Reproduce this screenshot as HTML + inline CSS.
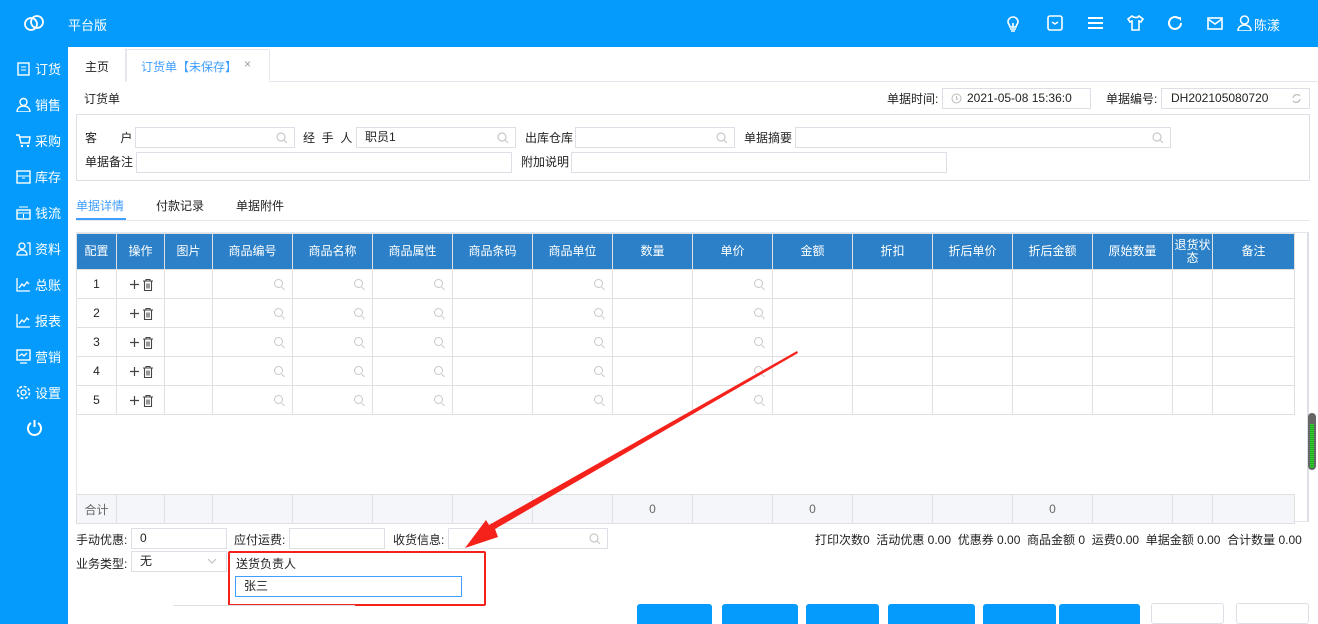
<!DOCTYPE html>
<html><head><meta charset="utf-8"><style>
*{margin:0;padding:0;box-sizing:border-box}
body{width:1318px;height:624px;overflow:hidden;background:#fff;font-family:"Liberation Sans","Noto Sans CJK SC",sans-serif;font-size:12px;color:#222;position:relative}
.a{position:absolute}
#top{left:0;top:0;width:1318px;height:47px;background:#049bfd}
#side{left:0;top:47px;width:68px;height:577px;background:#049bfd}
.nav{position:absolute;left:16px;color:#fff;font-size:13px;display:flex;align-items:center;gap:4px}
.nav svg{width:15px;height:15px}
.inp{position:absolute;border:1px solid #dcdfe6;background:#fff;height:21px;font-size:12px;padding-left:8px;line-height:19px}
.lbl{position:absolute;font-size:12px;color:#222}
table{position:absolute;left:76px;top:233px;border-collapse:collapse;table-layout:fixed}
th{background:#2b80c8;color:#fff;font-weight:normal;height:36px;border:1px solid #e0e0e0;font-size:12px;line-height:13px}
td{height:29px;border:1px solid #e0e0e0;text-align:center;position:relative;font-size:12px}
td.s::after{content:"";position:absolute;right:9px;top:9px;width:7px;height:7px;border:1.3px solid #c8c8c8;border-radius:50%}
td.s::before{content:"";position:absolute;right:7px;top:18px;width:4px;height:1.3px;background:#c8c8c8;transform:rotate(45deg)}
.op svg{vertical-align:middle}
.btn{position:absolute;top:604px;height:20px;background:#049bfd;border-radius:3px 3px 0 0}
</style></head><body>
<div id="top" class="a">
 <svg class="a" style="left:22px;top:13px" width="24" height="20" viewBox="0 0 24 20"><g fill="none" stroke="#fff" stroke-width="1.8"><circle cx="9" cy="11" r="6"/><circle cx="15" cy="9" r="6"/></g></svg>
 <div class="a" style="left:68px;top:15px;color:#fff;font-size:13px">平台版</div>
 <svg class="a" style="left:1005px;top:15px" width="16" height="17" viewBox="0 0 16 17"><g fill="none" stroke="#fff" stroke-width="1.6"><path d="M3 7a5 5 0 0 1 10 0c0 2-2 3-2 5H5c0-2-2-3-2-5z"/><path d="M5 14h6M6 16h4M8 8v4"/></g></svg>
 <svg class="a" style="left:1047px;top:15px" width="16" height="16" viewBox="0 0 16 16"><rect x="1" y="1" width="14" height="14" rx="2" fill="none" stroke="#fff" stroke-width="1.6"/><path d="M5 7l3 2 3-2" fill="none" stroke="#fff" stroke-width="1.5"/></svg>
 <svg class="a" style="left:1088px;top:16px" width="15" height="14"><path d="M0 2h15M0 7h15M0 12h15" stroke="#fff" stroke-width="2"/></svg>
 <svg class="a" style="left:1127px;top:15px" width="17" height="16" viewBox="0 0 17 16"><path d="M5 1l-4 3 2 3 2-1v9h7V6l2 1 2-3-4-3c-1 2-5 2-7 0z" fill="none" stroke="#fff" stroke-width="1.6"/></svg>
 <svg class="a" style="left:1167px;top:15px" width="16" height="16" viewBox="0 0 16 16"><path d="M14 8a6 6 0 1 1-2-4.5" fill="none" stroke="#fff" stroke-width="2"/><path d="M10 2l4 0 0 4z" fill="#fff"/></svg>
 <svg class="a" style="left:1207px;top:17px" width="16" height="13" viewBox="0 0 16 13"><rect x="1" y="1" width="14" height="11" fill="none" stroke="#fff" stroke-width="1.6"/><path d="M1 2l7 5 7-5" fill="none" stroke="#fff" stroke-width="1.6"/></svg>
 <svg class="a" style="left:1237px;top:15px" width="15" height="16" viewBox="0 0 15 16"><circle cx="7.5" cy="5" r="4" fill="none" stroke="#fff" stroke-width="1.5"/><path d="M1 16c0-4 3-6 6.5-6s6.5 2 6.5 6z" fill="none" stroke="#fff" stroke-width="1.5"/></svg>
 <div class="a" style="left:1254px;top:15px;color:#fff;font-size:13px">陈漾</div>
</div>
<div id="side" class="a">
 <div class="nav" style="top:12px"><svg viewBox="0 0 15 15"><rect x="2" y="2" width="11" height="12" fill="none" stroke="#fff" stroke-width="1.4"/><path d="M5 6h5M5 9h5" stroke="#fff"/></svg>订货</div>
 <div class="nav" style="top:48px"><svg viewBox="0 0 15 15"><circle cx="7.5" cy="5" r="3.5" fill="none" stroke="#fff" stroke-width="1.4"/><path d="M1 15c0-4 3-6 6.5-6s6.5 2 6.5 6z" fill="none" stroke="#fff" stroke-width="1.4"/></svg>销售</div>
 <div class="nav" style="top:84px"><svg viewBox="0 0 15 15"><path d="M0 2h3l2 8h8l1-6H4" fill="none" stroke="#fff" stroke-width="1.4"/><circle cx="6" cy="13" r="1.2" fill="#fff"/><circle cx="12" cy="13" r="1.2" fill="#fff"/></svg>采购</div>
 <div class="nav" style="top:120px"><svg viewBox="0 0 15 15"><rect x="1" y="2" width="13" height="12" fill="none" stroke="#fff" stroke-width="1.4"/><path d="M1 7h13M6 9h3" stroke="#fff"/></svg>库存</div>
 <div class="nav" style="top:156px"><svg viewBox="0 0 15 15"><rect x="1" y="5" width="13" height="9" fill="none" stroke="#fff" stroke-width="1.4"/><path d="M3 2h9M1 8h13M7.5 9v4" stroke="#fff"/></svg>钱流</div>
 <div class="nav" style="top:192px"><svg viewBox="0 0 15 15"><circle cx="6" cy="5" r="3" fill="none" stroke="#fff" stroke-width="1.3"/><path d="M1 14c0-3 2-5 5-5s5 2 5 5zM11 2h3v12" fill="none" stroke="#fff" stroke-width="1.3"/></svg>资料</div>
 <div class="nav" style="top:228px"><svg viewBox="0 0 15 15"><path d="M1 1v13h13M3 11l3-4 2 2 3-4 2 2" fill="none" stroke="#fff" stroke-width="1.3"/></svg>总账</div>
 <div class="nav" style="top:264px"><svg viewBox="0 0 15 15"><path d="M1 1v13h13M3 11l3-4 2 2 3-4 2 2" fill="none" stroke="#fff" stroke-width="1.3"/></svg>报表</div>
 <div class="nav" style="top:300px"><svg viewBox="0 0 15 15"><rect x="1" y="1" width="13" height="10" fill="none" stroke="#fff" stroke-width="1.4"/><path d="M4 14h7M3 7l3-2 2 2 3-3" fill="none" stroke="#fff" stroke-width="1.3"/></svg>营销</div>
 <div class="nav" style="top:336px"><svg viewBox="0 0 15 15"><circle cx="7.5" cy="7.5" r="2.5" fill="none" stroke="#fff" stroke-width="1.3"/><circle cx="7.5" cy="7.5" r="6" fill="none" stroke="#fff" stroke-width="1.6" stroke-dasharray="3 1.7"/></svg>设置</div>
 <svg class="a" style="left:26px;top:372px" width="17" height="17" viewBox="0 0 17 17"><path d="M5 4a6.5 6.5 0 1 0 7 0" fill="none" stroke="#fff" stroke-width="2"/><path d="M8.5 1v7" stroke="#fff" stroke-width="2"/></svg>
</div>
<div class="a" style="left:68px;top:81px;width:1250px;height:1px;background:#e4e7ed"></div>
<div class="a" style="left:68px;top:48px;width:58px;height:34px;border-right:1px solid #e4e7ed;background:#fff"></div>
<div class="lbl" style="left:85px;top:58px">主页</div>
<div class="a" style="left:126px;top:49px;width:144px;height:33px;border:1px solid #e4e7ed;border-bottom:1px solid #fff;background:#fff"></div>
<div class="lbl" style="left:141px;top:58px;color:#409eff">订货单【未保存】</div>
<div class="lbl" style="left:244px;top:57px;color:#999">×</div>
<div class="lbl" style="left:84px;top:90px">订货单</div>
<div class="lbl" style="left:887px;top:90px">单据时间:</div>
<div class="inp" style="left:942px;top:88px;width:149px;padding-left:24px">2021-05-08 15:36:0</div>
<svg class="a" style="left:951px;top:93px" width="11" height="11"><circle cx="5.5" cy="5.5" r="4.5" fill="none" stroke="#bbb"/><path d="M5.5 3v3h2" fill="none" stroke="#bbb"/></svg>
<div class="lbl" style="left:1106px;top:90px">单据编号:</div>
<div class="inp" style="left:1161px;top:88px;width:149px;padding-left:9px">DH202105080720</div>
<svg class="a" style="left:1291px;top:93px" width="11" height="11"><path d="M2 5a4 4 0 0 1 7-2M9 6a4 4 0 0 1-7 2" fill="none" stroke="#bbb" stroke-width="1.2"/></svg>
<div class="a" style="left:76px;top:114px;width:1234px;height:67px;border:1px solid #dcdfe6"></div>
<div class="lbl" style="left:85px;top:129px">客&nbsp;&nbsp;&nbsp;&nbsp;&nbsp;&nbsp;&nbsp;户</div>
<div class="inp" style="left:135px;top:127px;width:160px"></div>
<div class="lbl" style="left:303px;top:129px">经&nbsp;&nbsp;手&nbsp;&nbsp;人</div>
<div class="inp" style="left:356px;top:127px;width:160px">职员1</div>
<div class="lbl" style="left:525px;top:129px">出库仓库</div>
<div class="inp" style="left:575px;top:127px;width:160px"></div>
<div class="lbl" style="left:744px;top:129px">单据摘要</div>
<div class="inp" style="left:795px;top:127px;width:376px"></div>
<div class="lbl" style="left:85px;top:153px">单据备注</div>
<div class="inp" style="left:136px;top:152px;width:376px"></div>
<div class="lbl" style="left:521px;top:153px">附加说明</div>
<div class="inp" style="left:571px;top:152px;width:376px"></div>
<svg class="a" style="left:276px;top:132px" width="12" height="12"><circle cx="5" cy="5" r="4" fill="none" stroke="#c8c8c8" stroke-width="1.2"/><path d="M8 8l3 3" stroke="#c8c8c8" stroke-width="1.2"/></svg>
<svg class="a" style="left:497px;top:132px" width="12" height="12"><circle cx="5" cy="5" r="4" fill="none" stroke="#c8c8c8" stroke-width="1.2"/><path d="M8 8l3 3" stroke="#c8c8c8" stroke-width="1.2"/></svg>
<svg class="a" style="left:716px;top:132px" width="12" height="12"><circle cx="5" cy="5" r="4" fill="none" stroke="#c8c8c8" stroke-width="1.2"/><path d="M8 8l3 3" stroke="#c8c8c8" stroke-width="1.2"/></svg>
<svg class="a" style="left:1152px;top:132px" width="12" height="12"><circle cx="5" cy="5" r="4" fill="none" stroke="#c8c8c8" stroke-width="1.2"/><path d="M8 8l3 3" stroke="#c8c8c8" stroke-width="1.2"/></svg>
<div class="lbl" style="left:76px;top:197px;color:#409eff">单据详情</div>
<div class="lbl" style="left:156px;top:197px">付款记录</div>
<div class="lbl" style="left:236px;top:197px">单据附件</div>
<div class="a" style="left:76px;top:220px;width:1234px;height:1px;background:#e4e7ed"></div>
<div class="a" style="left:76px;top:218px;width:50px;height:2px;background:#409eff"></div>
<div class="a" style="left:76px;top:232px;width:1233px;height:290px;border:1px solid #e4e7ed;border-right:2px solid #dcdfe6"></div>
<table>
<colgroup><col style="width:40px"><col style="width:48px"><col style="width:48px"><col style="width:80px"><col style="width:80px"><col style="width:80px"><col style="width:80px"><col style="width:80px"><col style="width:80px"><col style="width:80px"><col style="width:80px"><col style="width:80px"><col style="width:80px"><col style="width:80px"><col style="width:80px"><col style="width:40px"><col style="width:82px"></colgroup>
<tr><th>配置</th><th>操作</th><th>图片</th><th>商品编号</th><th>商品名称</th><th>商品属性</th><th>商品条码</th><th>商品单位</th><th>数量</th><th>单价</th><th>金额</th><th>折扣</th><th>折后单价</th><th>折后金额</th><th>原始数量</th><th>退货状态</th><th>备注</th></tr>
<tr><td>1</td><td class="op"><svg width="28" height="13"><path d="M3 6.5h9M7.5 2v9" stroke="#444" stroke-width="1.2"/><path d="M16 3h10M19 3V1.5h4V3M17.5 3.5v9h7v-9M20 5.5v5M22 5.5v5" fill="none" stroke="#444" stroke-width="1.1"/></svg></td><td></td><td class="s"></td><td class="s"></td><td class="s"></td><td></td><td class="s"></td><td></td><td class="s"></td><td></td><td></td><td></td><td></td><td></td><td></td><td></td></tr>
<tr><td>2</td><td class="op"><svg width="28" height="13"><path d="M3 6.5h9M7.5 2v9" stroke="#444" stroke-width="1.2"/><path d="M16 3h10M19 3V1.5h4V3M17.5 3.5v9h7v-9M20 5.5v5M22 5.5v5" fill="none" stroke="#444" stroke-width="1.1"/></svg></td><td></td><td class="s"></td><td class="s"></td><td class="s"></td><td></td><td class="s"></td><td></td><td class="s"></td><td></td><td></td><td></td><td></td><td></td><td></td><td></td></tr>
<tr><td>3</td><td class="op"><svg width="28" height="13"><path d="M3 6.5h9M7.5 2v9" stroke="#444" stroke-width="1.2"/><path d="M16 3h10M19 3V1.5h4V3M17.5 3.5v9h7v-9M20 5.5v5M22 5.5v5" fill="none" stroke="#444" stroke-width="1.1"/></svg></td><td></td><td class="s"></td><td class="s"></td><td class="s"></td><td></td><td class="s"></td><td></td><td class="s"></td><td></td><td></td><td></td><td></td><td></td><td></td><td></td></tr>
<tr><td>4</td><td class="op"><svg width="28" height="13"><path d="M3 6.5h9M7.5 2v9" stroke="#444" stroke-width="1.2"/><path d="M16 3h10M19 3V1.5h4V3M17.5 3.5v9h7v-9M20 5.5v5M22 5.5v5" fill="none" stroke="#444" stroke-width="1.1"/></svg></td><td></td><td class="s"></td><td class="s"></td><td class="s"></td><td></td><td class="s"></td><td></td><td class="s"></td><td></td><td></td><td></td><td></td><td></td><td></td><td></td></tr>
<tr><td>5</td><td class="op"><svg width="28" height="13"><path d="M3 6.5h9M7.5 2v9" stroke="#444" stroke-width="1.2"/><path d="M16 3h10M19 3V1.5h4V3M17.5 3.5v9h7v-9M20 5.5v5M22 5.5v5" fill="none" stroke="#444" stroke-width="1.1"/></svg></td><td></td><td class="s"></td><td class="s"></td><td class="s"></td><td></td><td class="s"></td><td></td><td class="s"></td><td></td><td></td><td></td><td></td><td></td><td></td><td></td></tr>
</table>
<table style="top:494px">
<colgroup><col style="width:40px"><col style="width:48px"><col style="width:48px"><col style="width:80px"><col style="width:80px"><col style="width:80px"><col style="width:80px"><col style="width:80px"><col style="width:80px"><col style="width:80px"><col style="width:80px"><col style="width:80px"><col style="width:80px"><col style="width:80px"><col style="width:80px"><col style="width:40px"><col style="width:82px"></colgroup>
<tr style="background:#f5f6fa;color:#666"><td style="height:27px">合计</td><td></td><td></td><td></td><td></td><td></td><td></td><td></td><td>0</td><td></td><td>0</td><td></td><td></td><td>0</td><td></td><td></td><td></td></tr>
</table>
<div class="a" style="left:1308px;top:413px;width:8px;height:57px;background:#666;border-radius:4px"></div>
<div class="a" style="left:1310px;top:424px;width:4px;height:44px;background:repeating-linear-gradient(#3c3 0 1px,#2a2 1px 2px)"></div>
<div class="lbl" style="left:76px;top:531px">手动优惠:</div>
<div class="inp" style="left:131px;top:528px;width:96px">0</div>
<div class="lbl" style="left:234px;top:531px">应付运费:</div>
<div class="inp" style="left:289px;top:528px;width:96px"></div>
<div class="lbl" style="left:393px;top:531px">收货信息:</div>
<div class="inp" style="left:448px;top:528px;width:160px"></div>
<svg class="a" style="left:589px;top:533px" width="12" height="12"><circle cx="5" cy="5" r="4" fill="none" stroke="#c8c8c8" stroke-width="1.2"/><path d="M8 8l3 3" stroke="#c8c8c8" stroke-width="1.2"/></svg>
<div class="lbl" style="left:815px;top:531px">打印次数0&nbsp;&nbsp;活动优惠 0.00&nbsp;&nbsp;优惠券 0.00&nbsp;&nbsp;商品金额 0&nbsp;&nbsp;运费0.00&nbsp;&nbsp;单据金额 0.00&nbsp;&nbsp;合计数量 0.00</div>
<div class="lbl" style="left:76px;top:555px">业务类型:</div>
<div class="inp" style="left:131px;top:551px;width:96px">无</div>
<svg class="a" style="left:207px;top:558px" width="10" height="6"><path d="M1 1l4 4 4-4" fill="none" stroke="#bbb"/></svg>
<div class="a" style="left:228px;top:551px;width:258px;height:55px;border:2px solid #f5221b;border-radius:2px"></div>
<div class="lbl" style="left:236px;top:555px">送货负责人</div>
<div class="inp" style="left:235px;top:576px;width:227px;height:21px;border-color:#409eff">张三</div>
<div class="a" style="left:173px;top:605px;width:182px;height:1px;background:#dcdfe6"></div>
<div class="btn" style="left:637px;width:75px"></div>
<div class="btn" style="left:722px;width:76px"></div>
<div class="btn" style="left:806px;width:73px"></div>
<div class="btn" style="left:888px;width:87px"></div>
<div class="btn" style="left:983px;width:73px"></div>
<div class="btn" style="left:1059px;width:81px"></div>
<div class="a" style="left:1151px;top:603px;width:73px;height:21px;border:1px solid #dcdfe6;border-radius:3px"></div>
<div class="a" style="left:1236px;top:603px;width:73px;height:21px;border:1px solid #dcdfe6;border-radius:3px"></div>
<svg class="a" style="left:0;top:0" width="1318" height="624"><polygon points="797,351 798,353 495,529 498,537 465,548 486,520 489,525" fill="#f5221b"/></svg>
</body></html>
